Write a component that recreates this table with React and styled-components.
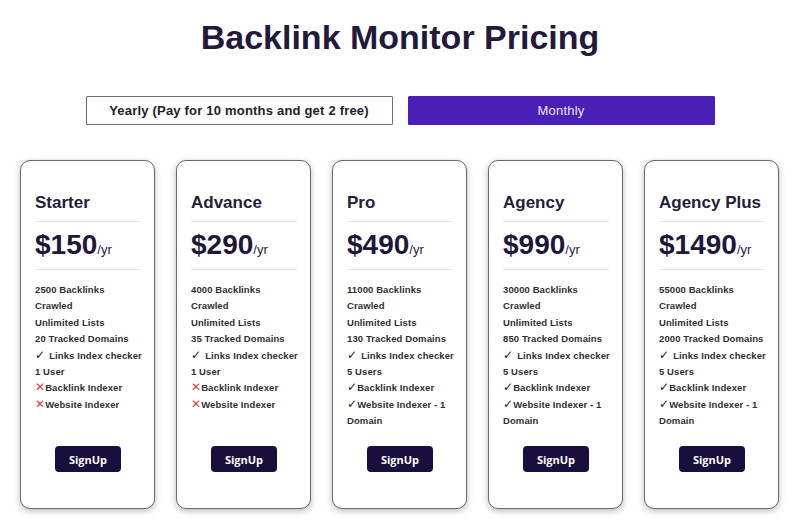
import styled, { createGlobalStyle } from "styled-components";

const plans = [
  {
    name: "Starter",
    price: "$150",
    features: [
      { text: "2500 Backlinks" },
      { text: "Crawled" },
      { text: "Unlimited Lists" },
      { text: "20 Tracked Domains" },
      { text: "Links Index checker", mark: "check", spaced: true },
      { text: "1 User" },
      { text: "Backlink Indexer", mark: "cross" },
      { text: "Website Indexer", mark: "cross" },
    ],
  },
  {
    name: "Advance",
    price: "$290",
    features: [
      { text: "4000 Backlinks" },
      { text: "Crawled" },
      { text: "Unlimited Lists" },
      { text: "35 Tracked Domains" },
      { text: "Links Index checker", mark: "check", spaced: true },
      { text: "1 User" },
      { text: "Backlink Indexer", mark: "cross" },
      { text: "Website Indexer", mark: "cross" },
    ],
  },
  {
    name: "Pro",
    price: "$490",
    features: [
      { text: "11000 Backlinks" },
      { text: "Crawled" },
      { text: "Unlimited Lists" },
      { text: "130 Tracked Domains" },
      { text: "Links Index checker", mark: "check", spaced: true },
      { text: "5 Users" },
      { text: "Backlink Indexer", mark: "check" },
      { text: "Website Indexer - 1", mark: "check" },
      { text: "Domain" },
    ],
  },
  {
    name: "Agency",
    price: "$990",
    features: [
      { text: "30000 Backlinks" },
      { text: "Crawled" },
      { text: "Unlimited Lists" },
      { text: "850 Tracked Domains" },
      { text: "Links Index checker", mark: "check", spaced: true },
      { text: "5 Users" },
      { text: "Backlink Indexer", mark: "check" },
      { text: "Website Indexer - 1", mark: "check" },
      { text: "Domain" },
    ],
  },
  {
    name: "Agency Plus",
    price: "$1490",
    features: [
      { text: "55000 Backlinks" },
      { text: "Crawled" },
      { text: "Unlimited Lists" },
      { text: "2000 Tracked Domains" },
      { text: "Links Index checker", mark: "check", spaced: true },
      { text: "5 Users" },
      { text: "Backlink Indexer", mark: "check" },
      { text: "Website Indexer - 1", mark: "check" },
      { text: "Domain" },
    ],
  },
];

const GlobalStyle = createGlobalStyle`
  body {
    margin: 0;
    background: #ffffff;
    font-family: "Liberation Sans", Arial, sans-serif;
  }
`;

const Page = styled.div`
  width: 800px;
  height: 521px;
  display: flex;
  flex-direction: column;
  align-items: center;
  overflow: hidden;
`;

const Title = styled.h1`
  margin: 17px 0 0;
  font-size: 34px;
  line-height: 40px;
  font-weight: 700;
  color: #231a3b;
`;

const Toggle = styled.div`
  display: flex;
  gap: 15px;
  margin-top: 39px;
`;

const ToggleButton = styled.button`
  width: 307px;
  height: 29px;
  box-sizing: border-box;
  font-family: "Liberation Sans", Arial, sans-serif;
  font-size: 13px;
  letter-spacing: 0.2px;
  cursor: pointer;
  font-weight: ${(p) => (p.active ? 400 : 700)};
  color: ${(p) => (p.active ? "#ebe7ff" : "#221c2e")};
  background: ${(p) => (p.active ? "#4a1fb8" : "#ffffff")};
  border: 1px solid ${(p) => (p.active ? "#4a1fb8" : "#6e6e6e")};
  border-radius: 1px;
`;

const Cards = styled.div`
  display: flex;
  gap: 21px;
  margin-top: 35px;
  margin-left: -1px;
`;

const Card = styled.div`
  width: 135px;
  height: 349px;
  box-sizing: border-box;
  padding: 32px 13px 36px 14px;
  display: flex;
  flex-direction: column;
  border: 1px solid #6a6a6a;
  border-radius: 10px;
  box-shadow: 0 2px 6px rgba(0, 0, 0, 0.28);
  background: #ffffff;
`;

const PlanName = styled.div`
  font-size: 17px;
  line-height: 20px;
  font-weight: 700;
  color: #261d38;
  padding-bottom: 8px;
  border-bottom: 1px solid #e4e4e4;
`;

const Price = styled.div`
  display: flex;
  align-items: baseline;
  padding: 8px 0 9px;
  border-bottom: 1px solid #e4e4e4;
  color: #1f1737;
`;

const Amount = styled.span`
  font-size: 28px;
  line-height: 30px;
  font-weight: 700;
`;

const Per = styled.span`
  font-size: 13px;
  color: #2a2140;
`;

const Features = styled.ul`
  list-style: none;
  margin: 12px 0 0;
  padding: 0;
`;

const Feature = styled.li`
  font-size: 9.5px;
  line-height: 16.4px;
  font-weight: 700;
  letter-spacing: 0.1px;
  color: #2f2f2f;
  white-space: nowrap;
`;

const Mark = styled.span`
  display: inline-block;
  font-family: "DejaVu Sans", sans-serif;
  font-weight: 400;
  font-size: 12px;
  line-height: 10px;
  margin-right: ${(p) => (p.spaced ? "4px" : "0")};
  color: ${(p) => (p.kind === "cross" ? "#e0413f" : "#222222")};
`;

const SignUp = styled.button`
  margin: auto auto 0;
  width: 66px;
  height: 26px;
  border: none;
  border-radius: 4px;
  background: #180f3c;
  color: #ffffff;
  font-family: "Open Sans", sans-serif;
  font-weight: 700;
  font-size: 11px;
  cursor: pointer;
`;

export default function App() {
  return (
    <Page>
      <GlobalStyle />
      <Title>Backlink Monitor Pricing</Title>
      <Toggle>
        <ToggleButton>Yearly (Pay for 10 months and get 2 free)</ToggleButton>
        <ToggleButton active>Monthly</ToggleButton>
      </Toggle>
      <Cards>
        {plans.map((plan) => (
          <Card key={plan.name}>
            <PlanName>{plan.name}</PlanName>
            <Price>
              <Amount>{plan.price}</Amount>
              <Per>/yr</Per>
            </Price>
            <Features>
              {plan.features.map((f, i) => (
                <Feature key={i}>
                  {f.mark && (
                    <Mark kind={f.mark} spaced={f.spaced}>
                      {f.mark === "cross" ? "✕" : "✓"}
                    </Mark>
                  )}
                  {f.text}
                </Feature>
              ))}
            </Features>
            <SignUp>SignUp</SignUp>
          </Card>
        ))}
      </Cards>
    </Page>
  );
}
